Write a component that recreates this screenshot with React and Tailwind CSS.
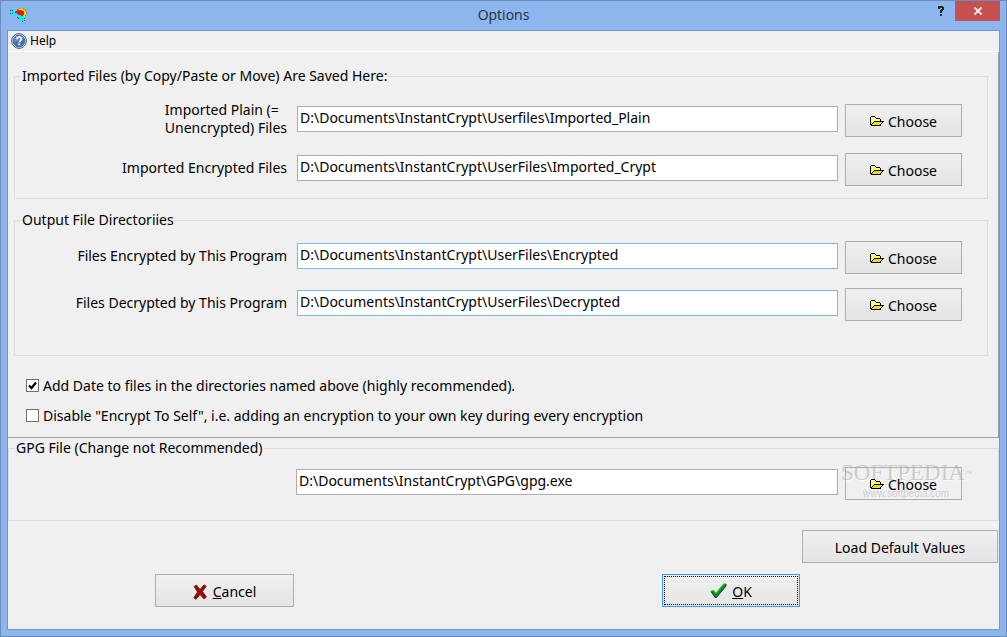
import { useState } from "react";

function AppIcon() {
  return (
    <svg width="18" height="15" viewBox="0 0 18 15" shapeRendering="crispEdges" aria-hidden="true">
      <path d="M8 2h2V1h4v1h2v2h1v4h-1v2h-2v1h-2L6 6V4h2z" fill="#ffe600" stroke="#806000" strokeWidth="0.4" />
      <path d="M8 3h5v1h2v4h-1v1h-4L7 6V4h1z" fill="#ff1010" />
      <path d="M1 3h4l2 3 3 2 4 1 2 2v3h-2l-4-2-4-4-5-2z" fill="#00f4f4" />
      <path d="M1 3h3M6 5v1M1 6l3 1M8 10l2 2M13 14h2v-3" fill="none" stroke="#0b5c74" strokeWidth="1" strokeDasharray="1 1" />
    </svg>
  );
}

function HelpIcon() {
  return (
    <svg width="16" height="16" viewBox="0 0 16 16" aria-hidden="true">
      <circle cx="8" cy="8" r="7.4" fill="#e8eef6" stroke="#365c93" strokeWidth="1" />
      <circle cx="8" cy="8" r="5.9" fill="#4a72ab" stroke="#365c93" strokeWidth="0.8" />
      <path d="M3 6a5.4 5.4 0 0 1 10 0c-3 1-7 2-10 3z" fill="#7f9fcb" opacity=".6" />
      <path d="M5.8 6.2c0-2.9 4.6-2.8 4.6-.1 0 1.700-2.200 1.700-2.200 3.300" fill="none" stroke="#fff" strokeWidth="1.600" />
      <rect x="7.300" y="10.500" width="1.800" height="1.700" fill="#fff" />
    </svg>
  );
}

function FolderIcon() {
  return (
    <svg width="14" height="12" viewBox="0 0 14 12" shapeRendering="crispEdges" aria-hidden="true">
      <path d="M1 1h4v1h5v3H4L1 9z" fill="#fdf97a" />
      <path d="M4 6h9l-3 3H2z" fill="#e8de20" />
      <path d="M1 0h4v1H1zM0 1h1v8H0zM5 1h1v1H5zM6 2h4v1H6zM10 3h1v2h-1zM4 5h10v1H4zM3 6h1v1H3zM2 7h1v1H2zM1 8h1v1H1zM1 9h10v1H1zM12 6h1v1h-1zM11 7h1v1h-1zM10 8h1v1h-1z" fill="#000" />
    </svg>
  );
}

function CrossIcon() {
  return (
    <svg width="14" height="16" viewBox="0 0 14 16" aria-hidden="true">
      <path d="M1 2.500 3.500 1 7 5.500 11 .8l2.300 1.400L9.500 7.500l4 5.500-2.500 2-4-4.500L3 15.300.7 14 4.500 8z" fill="#960808" stroke="#5c2020" strokeWidth="0.8" />
      <path d="M2.500 2.500 11.500 13M11.500 2 2 13.500" stroke="#b80000" strokeWidth="1" />
    </svg>
  );
}

function CheckIcon() {
  return (
    <svg width="17" height="16" viewBox="0 0 17 16" aria-hidden="true">
      <path d="M1 8.500 3.500 7.500 6 10.500 13.500 1.500 16 1v2L6.500 14.500H5z" fill="#0a8a1c" stroke="#0c2c50" strokeWidth="0.900" />
      <path d="M1.300 8.300 3.500 7.400 6 10.300 13.500 1.300 15.500 1" fill="none" stroke="#1fd81f" strokeWidth="1.200" />
    </svg>
  );
}

const buttonFrame = "flex h-[33px] items-center justify-center border border-[#adadad] pt-[2px]";
const buttonFill = "bg-linear-to-b from-[#f0f0f0] to-[#e4e4e4]";

function PathRow({ id, label, name, value, blue = false, clear = false }) {
  const [path, setPath] = useState(value);
  return (
    <div className="relative flex h-[33px] items-center">
      <div className="mb-1 flex w-[272px] shrink-0 justify-end leading-[18px]">
        {label && <label htmlFor={id} className="whitespace-pre-line">{label}</label>}
      </div>
      <input
        id={id}
        aria-label={name}
        value={path}
        onChange={(e) => setPath(e.target.value)}
        className={`mb-1 ml-[10px] h-[26px] min-w-0 flex-1 border bg-white px-[2px] pb-[2px] outline-none ${blue ? "border-[#7eb4ea]" : "border-[#abadb3]"}`}
      />
      <button
        type="button"
        className={`${buttonFrame} ${clear ? "" : buttonFill} ml-[7px] w-[117px] shrink-0 gap-1`}
      >
        <FolderIcon />
        Choose
      </button>
    </div>
  );
}

function Tick({ id, label, initial }) {
  const [on, setOn] = useState(initial);
  return (
    <div className="flex h-[30px] items-center gap-1">
      <span className="relative flex size-[13px]">
        <input
          id={id}
          type="checkbox"
          checked={on}
          onChange={() => setOn(!on)}
          className="peer size-[13px] appearance-none border border-[#707070] bg-white"
        />
        <svg viewBox="0 0 13 13" className="pointer-events-none absolute inset-0 hidden peer-checked:block" aria-hidden="true">
          <path d="M3 6.500 5.500 9 10 3.500" fill="none" stroke="#000" strokeWidth="2.200" />
        </svg>
      </span>
      <label htmlFor={id}>{label}</label>
    </div>
  );
}

export default function App() {
  return (
    <div className="flex min-h-screen flex-col border border-[#6d8cba] bg-[#8db5ee] px-[6px] pb-[6px] font-['Noto_Sans',sans-serif] text-[14px] text-black">
      <header className="flex h-[29px] items-start">
        <div className="flex w-24 items-start pt-[6px] pl-[2px]">
          <AppIcon />
        </div>
        <h1 className="flex-1 pt-[3px] text-center font-['Open_Sans',sans-serif] text-[14px] leading-[22px] text-[#222b38]">
          Options
        </h1>
        <div className="flex w-24 justify-end">
          <button type="button" aria-label="Help" className="flex h-5 w-[28px] items-center justify-center">
            <svg width="8" height="10" viewBox="0 0 8 10" shapeRendering="crispEdges" aria-hidden="true">
              <path d="M1 0h5v1h1v3H6v1H5v2H3V4h1V3h1V2H3v1H1zM3 8h2v2H3z" fill="#222" />
            </svg>
          </button>
          <button type="button" aria-label="Close" className="flex h-5 w-[45px] items-center justify-center bg-[#c75050]">
            <svg width="8" height="8" viewBox="0 0 8 8" aria-hidden="true">
              <path d="M.5.500 7.500 7.500M7.500.500.500 7.500" stroke="#fff" strokeWidth="1.700" />
            </svg>
          </button>
        </div>
      </header>

      <main className="flex flex-1 flex-col border border-[#7396cc] bg-[#f0f0f0]">
        <nav className="flex h-[21px] items-center border-b border-white pl-[3px]">
          <button type="button" className="flex items-center gap-[3px] text-[12px]">
            <HelpIcon />
            Help
          </button>
        </nav>

        <section className="border-r border-b border-[#a0a0a0] pt-[15px] pr-[10px] pb-[7px] pl-[6px]">
          <fieldset className="min-w-0 border border-[#dcdcdc] pr-[25px] pb-3">
            <legend className="ml-[6px] px-px leading-[18px]">Imported Files (by Copy/Paste or Move) Are Saved Here:</legend>
            <div className="flex flex-col gap-4 pt-[19px]">
              <PathRow id="plain" label={"Imported Plain (=\nUnencrypted) Files"} value="D:\Documents\InstantCrypt\Userfiles\Imported_Plain" />
              <PathRow id="crypt" label="Imported Encrypted Files" value="D:\Documents\InstantCrypt\UserFiles\Imported_Crypt" />
            </div>
          </fieldset>

          <fieldset className="mt-3 min-w-0 border border-[#dcdcdc] pr-[25px] pb-[34px]">
            <legend className="ml-[6px] px-px leading-[18px]">Output File Directoriies</legend>
            <div className="flex flex-col gap-[14px] pt-3">
              <PathRow id="encrypted" label="Files Encrypted by This Program" value="D:\Documents\InstantCrypt\UserFiles\Encrypted" blue />
              <PathRow id="decrypted" label="Files Decrypted by This Program" value="D:\Documents\InstantCrypt\UserFiles\Decrypted" blue />
            </div>
          </fieldset>

          <div className="pt-[14px] pl-3">
            <Tick id="add-date" label="Add Date to files in the directories named above (highly recommended)." initial />
            <Tick
              id="no-self"
              label={'Disable "Encrypt To Self", i.e. adding an encryption to your own key during every encryption'}
              initial={false}
            />
          </div>
        </section>

        <fieldset className="relative mt-px min-w-0 border border-[#dcdcdc] pr-[36px] pb-5 pl-[5px]">
          <legend className="ml-px px-px leading-[18px]">GPG File (Change not Recommended)</legend>
          <div className="pointer-events-none absolute top-[5px] right-[24px] w-[133px] text-[#cccccc] [text-shadow:1px_1px_0_#fafafa]">
            <p className="font-['Liberation_Serif',serif] text-[23px] leading-[22px] whitespace-nowrap">
              SOFTPEDIA<sup className="text-[8px]">™</sup>
            </p>
            <p className="pt-1 pl-[22px] font-['Liberation_Sans',sans-serif] text-[10px] leading-[12px]">www.softpedia.com</p>
          </div>
          <div className="pt-[10px]">
            <PathRow id="gpg" name="GPG File" value="D:\Documents\InstantCrypt\GPG\gpg.exe" clear />
          </div>
        </fieldset>

        <div className="flex justify-end pt-[9px] pr-px">
          <button type="button" className={`${buttonFrame} ${buttonFill} w-[196px]`}>Load Default Values</button>
        </div>
        <div className="flex justify-between pt-[11px] pr-[199px] pb-[20px] pl-[147px]">
          <button type="button" className={`${buttonFrame} ${buttonFill} w-[139px] gap-[6px]`}>
            <CrossIcon />
            <span><u>C</u>ancel</span>
          </button>
          <button type="button" className={`${buttonFill} flex h-[33px] w-[138px] border border-[#3399ff] p-px`}>
            <span className="flex h-full w-full items-center justify-center gap-[5px] border border-dotted border-black pt-px">
              <CheckIcon />
              <span><u>O</u>K</span>
            </span>
          </button>
        </div>
      </main>
    </div>
  );
}
